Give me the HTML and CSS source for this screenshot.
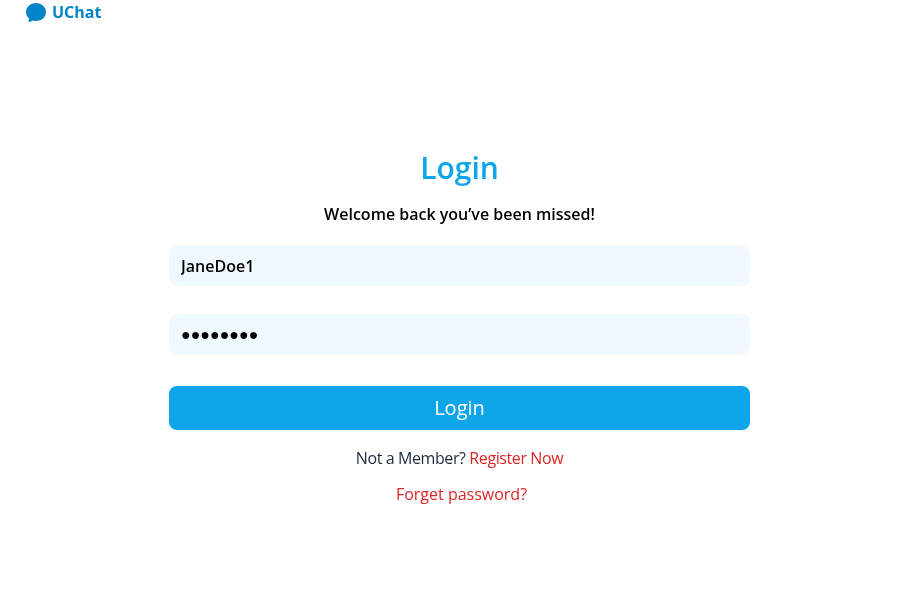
FILE: index.html
```html
<!DOCTYPE html>
<html lang="en">
<head>
<meta charset="utf-8">
<title>UChat</title>
<link rel="stylesheet" href="styles.css">
</head>
<body>
<header class="brand">
<svg class="brand-icon" viewBox="0 0 20 20" aria-hidden="true"><path d="M10 1C15.600 1 20 5 20 10S15.600 19 10 19C9 19 8 18.900 7.100 18.600C5.600 19.500 4 19.900 2.600 19.800C2.100 19.700 2 19.400 2.300 19C2.900 18.400 3.200 17.500 3 16.400C1.100 14.700 0 12.500 0 10C0 5 4.400 1 10 1Z"/></svg>
<span>UChat</span>
</header>
<main class="login">
<h1 class="title">Login</h1>
<p class="welcome">Welcome back you’ve been missed!</p>
<form class="form">
<input class="field" type="text" value="JaneDoe1" aria-label="Username">
<input class="field" type="text" value="●●●●●●●●" aria-label="Password">
<button class="submit" type="button">Login</button>
</form>
<p class="register">Not a Member? <a href="#">Register Now</a></p>
<p class="forgot"><a href="#">Forget password?</a></p>
</main>
</body>
</html>
```
FILE: styles.css
```css
* { box-sizing: border-box; margin: 0; padding: 0; }
body { font: 400 16px/24px "Open Sans", sans-serif; background: #fff; color: #1e293b; }
.brand, .login { will-change: transform; }
.brand { display: flex; align-items: center; gap: 6px; height: 24px; padding-left: 26px; color: #0284c7; font-weight: 700; }
.brand-icon { width: 20px; height: 20px; fill: currentColor; }
.login { width: 581px; margin: 126px auto 0; text-align: center; }
.title { font-size: 30px; line-height: 36px; font-weight: 600; color: #0ea5e9; }
.welcome { margin-top: 16px; font-weight: 600; color: #000; }
.form { display: flex; flex-direction: column; margin-top: 20px; }
.field { width: 100%; height: 40px; margin-bottom: 28px; padding: 0 12px; border: 0; border-radius: 8px; background: #f0f9ff; font: inherit; font-weight: 600; color: #000; }
.submit { height: 44px; margin-top: 4px; border: 0; border-radius: 8px; background: #0ea5e9; color: #fff; font: 400 20px/28px "Open Sans", sans-serif; }
.register { margin-top: 16px; letter-spacing: -0.4px; }
.forgot { margin-top: 12px; padding-left: 4px; }
a { color: #dc2626; text-decoration: none; }
```
